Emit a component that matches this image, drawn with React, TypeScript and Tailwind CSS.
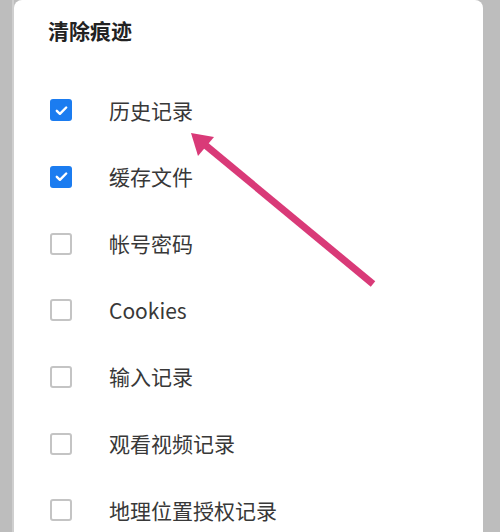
import React from 'react';

const items = [
  { label: '历史记录', checked: true },
  { label: '缓存文件', checked: true },
  { label: '帐号密码', checked: false },
  { label: 'Cookies', checked: false },
  { label: '输入记录', checked: false },
  { label: '观看视频记录', checked: false },
  { label: '地理位置授权记录', checked: false },
];

const Checkbox: React.FC<{ checked: boolean }> = ({ checked }) =>
  checked ? (
    <div className="w-[22px] h-[22px] rounded-[3px] bg-[#1b7cf0] flex items-center justify-center">
      <svg width="15" height="15" viewBox="0 0 16 16" fill="none">
        <path d="M3 8.3l3.3 3.2L13 4.8" stroke="white" strokeWidth="2.6" strokeLinecap="round" strokeLinejoin="round" />
      </svg>
    </div>
  ) : (
    <div className="w-[22px] h-[22px] rounded-[3px] border-2 border-[#c4c4c4] bg-white" />
  );

export default function App() {
  return (
    <div
      className="relative w-[500px] h-[532px] overflow-hidden bg-[#bdbdbd] flex"
      style={{ fontFamily: '"Noto Sans CJK SC", "Noto Sans", sans-serif' }}
    >
      <div className="w-[14px] shrink-0 flex justify-end">
        <div className="w-[2px] bg-[#cfcfcf]" />
      </div>
      {/* dialog card */}
      <div className="w-[469px] h-[560px] bg-white rounded-t-[8px] pl-[34px] pt-[17px]">
        <h2 className="text-[21px] leading-[26px] font-bold text-[#222]">清除痕迹</h2>
        <div className="mt-[34px]">
          {items.map(item => (
            <div key={item.label} className="h-[66.67px] flex items-center">
              <div className="ml-[2px] mr-[37px]">
                <Checkbox checked={item.checked} />
              </div>
              <span className="text-[21px] text-[#383838] leading-none">{item.label}</span>
            </div>
          ))}
        </div>
      </div>

      {/* annotation arrow */}
      <svg className="absolute left-0 top-0 pointer-events-none" width="500" height="532" viewBox="0 0 500 532">
        <line x1="373" y1="284" x2="204" y2="144" stroke="#d93a78" strokeWidth="7" strokeLinecap="butt" />
        <polygon points="191,133 214,137 198,156" fill="#d93a78" />
      </svg>
    </div>
  );
}
